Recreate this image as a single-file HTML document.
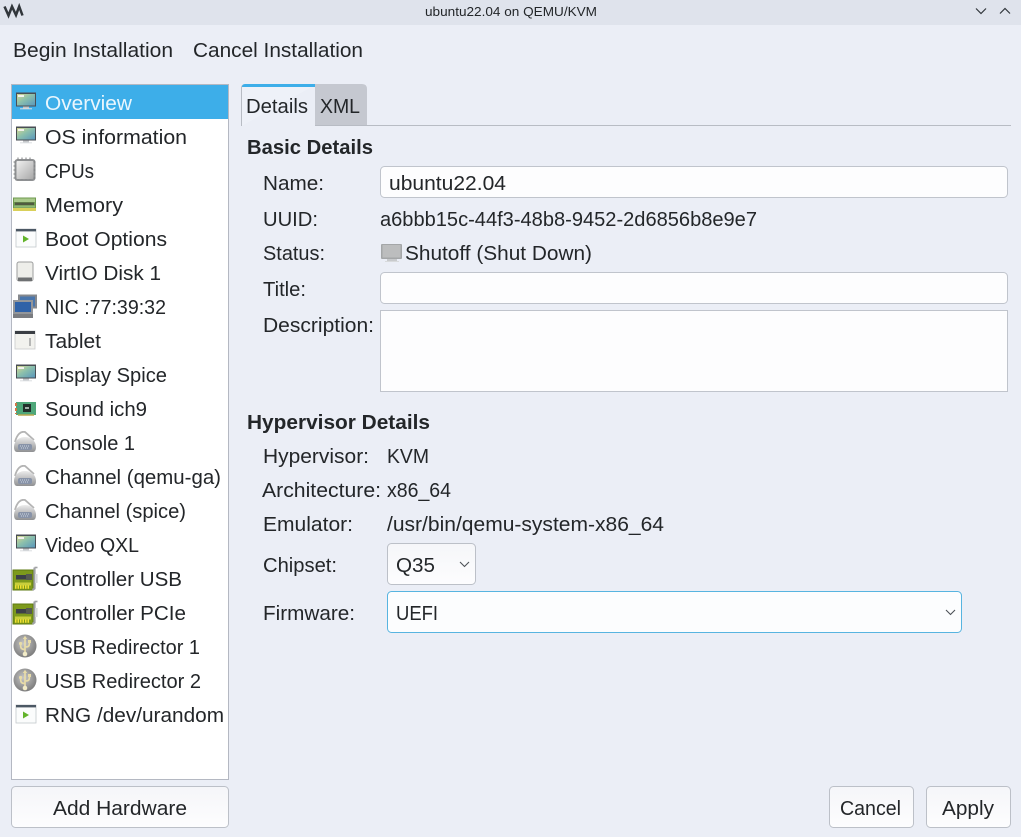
<!DOCTYPE html>
<html><head><meta charset="utf-8"><title>ubuntu22.04 on QEMU/KVM</title>
<style>
html,body{margin:0;padding:0;background:#ebeef6;width:1021px;height:837px;overflow:hidden}
svg{display:block}
text{font-family:"Liberation Sans",sans-serif;font-size:20px;fill:#232629}
</style></head><body>
<svg xmlns="http://www.w3.org/2000/svg" width="1021" height="837" viewBox="0 0 1021 837">
<defs>
<linearGradient id="btn" x1="0" y1="0" x2="0" y2="1"><stop offset="0" stop-color="#f5f6f9"/><stop offset="1" stop-color="#fdfdfe"/></linearGradient>
<linearGradient id="scr" x1="0" y1="0" x2="1" y2="1"><stop offset="0" stop-color="#d8d890"/><stop offset=".45" stop-color="#8cc0ac"/><stop offset="1" stop-color="#5a98bc"/></linearGradient>
<linearGradient id="gry" x1="0" y1="0" x2="1" y2="1"><stop offset="0" stop-color="#f0f0f0"/><stop offset="1" stop-color="#a8a8a8"/></linearGradient>
<linearGradient id="dome" x1="0" y1="0" x2="0" y2="1"><stop offset="0" stop-color="#ececec"/><stop offset="1" stop-color="#8f9092"/></linearGradient>
<radialGradient id="usb" cx=".45" cy=".4" r=".7"><stop offset="0" stop-color="#c8c8c8"/><stop offset="1" stop-color="#707070"/></radialGradient>
<symbol id="mon" width="22" height="22" viewBox="0 0 22 22"><rect x="1" y="1.5" width="20" height="14" fill="#4a4e54"/><rect x="2" y="3" width="18" height="11.500" fill="url(#scr)"/><rect x="3" y="4" width="6" height="2" fill="#f2f2ee"/><rect x="8" y="15.500" width="6" height="2" fill="#c4c7ca"/><rect x="5" y="17.300" width="12" height="1" fill="#dcdee0"/></symbol>
<symbol id="win" width="22" height="22" viewBox="0 0 22 22"><rect x="1" y="1" width="20" height="18" fill="#fbfcfc" stroke="#c4c8cc" stroke-width=".8"/><rect x="1" y="1" width="20" height="2.400" fill="#4c5864"/><path d="M8 7.500l6 3.500-6 3.500z" fill="#62b32a"/></symbol>
<symbol id="ser" width="24" height="22" viewBox="0 0 24 22"><path d="M2 11C4 3 8 0 12 1l9 8" fill="none" stroke="#b4b4b4" stroke-width="1.800"/><path d="M1 16C1 10 6 6 12 6s11 4 11 10c0 3-1 5-3 5H4c-2 0-3-2-3-5z" fill="url(#dome)"/><rect x="5" y="13" width="14" height="6" rx="2" fill="#8893a8"/><path d="M7 15h10M8 17h8" stroke="#cdd4e0" stroke-dasharray="1 1"/></symbol>
<symbol id="pci" width="26" height="26" viewBox="0 0 26 26"><rect x="1" y="5" width="20" height="20" fill="#7d9a1c"/><rect x="1" y="5" width="20" height="20" fill="none" stroke="#5e7a12"/><rect x="4" y="10" width="12" height="4.500" fill="#3c4048"/><rect x="14" y="9" width="6" height="6" fill="#555a50"/><path d="M3 19h16" stroke="#c9cf3c" stroke-width="3"/><path d="M3 22h15" stroke="#f0e030" stroke-width="3.500" stroke-dasharray="1.500 1"/><path d="M22.500 2.500v21l-2 1.500" fill="none" stroke="#a0a2a4" stroke-width="2.200"/><path d="M22.500 2.500h3" stroke="#a0a2a4" stroke-width="1.600"/><rect x="23" y="9" width="2.600" height="9" fill="#d8dadc"/></symbol>
<symbol id="usbi" width="24" height="24" viewBox="0 0 24 24"><circle cx="12" cy="12" r="11.500" fill="url(#usb)"/><path d="M12 3v17M12 15.500c-3.800 0-4.400-1.500-4.400-5M12 13c3.800 0 4.400-1 4.400-4" fill="none" stroke="#e8dca8" stroke-width="1.700"/><path d="M9.800 5L12 1.800 14.200 5z" fill="#e8dca8"/><circle cx="12" cy="20" r="2.300" fill="#f2ecc8"/><circle cx="7.600" cy="9.500" r="1.600" fill="#e8dca8"/><rect x="15" y="6" width="3" height="3" fill="#e8dca8"/></symbol>
</defs>

<!-- title bar -->
<rect x="0" y="0" width="1021" height="25" fill="#dfe3ec"/>
<path d="M4.500 6.500 8.500 15.500 12 6.500 16 15 19.200 6.500 22.500 15.500" fill="none" stroke="#31363b" stroke-width="2.500"/>
<text x="425" y="16" textLength="172" lengthAdjust="spacingAndGlyphs" style="font-size:13.3px">ubuntu22.04 on QEMU/KVM</text>
<path d="M976 8.500l5 5 5-5" fill="none" stroke="#31363b" stroke-width="1.200"/>
<path d="M1000 13.500l5-5 5 5" fill="none" stroke="#31363b" stroke-width="1.200"/>

<!-- menu -->
<text x="13" y="57" textLength="160" lengthAdjust="spacingAndGlyphs">Begin Installation</text>
<text x="193" y="57" textLength="170" lengthAdjust="spacingAndGlyphs">Cancel Installation</text>

<!-- list -->
<rect x="11.500" y="84.500" width="217" height="695" fill="#fff" stroke="#b4b8c2"/>
<rect x="12" y="85" width="216" height="34" fill="#3daee9"/>
<use href="#mon" x="15" y="91"/>
<use href="#mon" x="15" y="125"/>
<g>
<rect x="14.500" y="159" width="21" height="22" rx="3" fill="#8e9092"/>
<path d="M13.500 162h23M13.500 166h23M13.500 170h23M13.500 174h23M13.500 178h23M18 157.500v24M22 157.500v24M26 157.500v24M30 157.500v24" stroke="#7c7e80" stroke-width="1" stroke-dasharray="2 2" fill="none"/>
<rect x="16.500" y="161" width="17" height="18" rx="1" fill="url(#gry)"/>
</g>
<g>
<rect x="13" y="197.500" width="23" height="13.500" fill="#6f9a4f"/>
<rect x="14" y="198.500" width="21" height="3.500" fill="#a9c98b"/>
<rect x="15" y="202.500" width="19" height="2.600" fill="#4f5a40"/>
<rect x="14" y="205.500" width="21" height="2" fill="#8fb878"/>
<rect x="13" y="208" width="23" height="3" fill="#d9d05a"/>
</g>
<use href="#win" x="15" y="228"/>
<g>
<rect x="17" y="262" width="16" height="19" rx="2" fill="#eeeeea" stroke="#9c9e9e"/>
<rect x="18" y="277.500" width="14" height="3.500" fill="#6e7072"/>
</g>
<g>
<rect x="18" y="294.500" width="19" height="14" fill="#85888d"/><rect x="20" y="296.500" width="15" height="10" fill="#4a76ac"/>
<rect x="13" y="300" width="20" height="14" fill="#93969a"/><rect x="15" y="302" width="16" height="10" fill="#2f62a8"/>
<rect x="13" y="314" width="20" height="4" fill="#7a7c80"/>
</g>
<g>
<rect x="15" y="331" width="20" height="18" fill="#f2f2ee" stroke="#c8cacc" stroke-width=".8"/>
<rect x="15" y="331" width="20" height="3" fill="#3a3e44"/>
<path d="M30 338v8" stroke="#7a7c7e" stroke-width="1"/>
</g>
<use href="#mon" x="15" y="363"/>
<g>
<rect x="16" y="402" width="20" height="13" fill="#4fa77a"/>
<rect x="23" y="404" width="8" height="8" fill="#22302c"/>
<path d="M25 408h4" stroke="#d8e8e0" stroke-width="1.400"/>
<path d="M16 403v11" stroke="#d07848" stroke-width="2" stroke-dasharray="3 2"/>
<path d="M18 415h16" stroke="#b8a850" stroke-width="1.500"/>
</g>
<use href="#ser" x="13" y="431"/>
<use href="#ser" x="13" y="465"/>
<use href="#ser" x="13" y="499"/>
<use href="#mon" x="15" y="533"/>
<use href="#pci" x="12" y="565"/>
<use href="#pci" x="12" y="599"/>
<use href="#usbi" x="13" y="634"/>
<use href="#usbi" x="13" y="668"/>
<use href="#win" x="15" y="704"/>

<text x="45" y="110" textLength="87" lengthAdjust="spacingAndGlyphs" style="fill:#eaf6fd">Overview</text>
<text x="45" y="144" textLength="142" lengthAdjust="spacingAndGlyphs">OS information</text>
<text x="45" y="178" textLength="49" lengthAdjust="spacingAndGlyphs">CPUs</text>
<text x="45" y="212" textLength="78" lengthAdjust="spacingAndGlyphs">Memory</text>
<text x="45" y="246" textLength="122" lengthAdjust="spacingAndGlyphs">Boot Options</text>
<text x="45" y="280" textLength="116" lengthAdjust="spacingAndGlyphs">VirtIO Disk 1</text>
<text x="45" y="314" textLength="121" lengthAdjust="spacingAndGlyphs">NIC :77:39:32</text>
<text x="45" y="348" textLength="56" lengthAdjust="spacingAndGlyphs">Tablet</text>
<text x="45" y="382" textLength="122" lengthAdjust="spacingAndGlyphs">Display Spice</text>
<text x="45" y="416" textLength="102" lengthAdjust="spacingAndGlyphs">Sound ich9</text>
<text x="45" y="450" textLength="90" lengthAdjust="spacingAndGlyphs">Console 1</text>
<text x="45" y="484" textLength="176" lengthAdjust="spacingAndGlyphs">Channel (qemu-ga)</text>
<text x="45" y="518" textLength="141" lengthAdjust="spacingAndGlyphs">Channel (spice)</text>
<text x="45" y="552" textLength="94" lengthAdjust="spacingAndGlyphs">Video QXL</text>
<text x="45" y="586" textLength="137" lengthAdjust="spacingAndGlyphs">Controller USB</text>
<text x="45" y="620" textLength="141" lengthAdjust="spacingAndGlyphs">Controller PCIe</text>
<text x="45" y="654" textLength="155" lengthAdjust="spacingAndGlyphs">USB Redirector 1</text>
<text x="45" y="688" textLength="156" lengthAdjust="spacingAndGlyphs">USB Redirector 2</text>
<text x="45" y="722" textLength="179" lengthAdjust="spacingAndGlyphs">RNG /dev/urandom</text>

<!-- bottom buttons -->
<rect x="11.500" y="786.500" width="217" height="41" rx="4" fill="url(#btn)" stroke="#bcc0c8"/>
<text x="53" y="815" textLength="134" lengthAdjust="spacingAndGlyphs">Add Hardware</text>
<rect x="829.500" y="786.500" width="84" height="41" rx="4" fill="url(#btn)" stroke="#bcc0c8"/>
<text x="840" y="815" textLength="61" lengthAdjust="spacingAndGlyphs">Cancel</text>
<rect x="926.500" y="786.500" width="84" height="41" rx="4" fill="url(#btn)" stroke="#bcc0c8"/>
<text x="942" y="815" textLength="52" lengthAdjust="spacingAndGlyphs">Apply</text>

<!-- tabs -->
<path d="M315 125.500H1011" stroke="#b8bcc4"/>
<path d="M241.500 126V88q0-3 3-3H315" fill="#eef1f8" stroke="#b8bcc4"/>
<path d="M315 84h47q5 0 5 5v36H315z" fill="#c5c8d0"/>
<path d="M242 87q0-3 3-3h70v3z" fill="#3daee9"/>
<text x="246" y="113" textLength="62" lengthAdjust="spacingAndGlyphs">Details</text>
<text x="320" y="113" textLength="40" lengthAdjust="spacingAndGlyphs">XML</text>

<text x="247" y="154" textLength="126" lengthAdjust="spacingAndGlyphs" style="font-weight:bold">Basic Details</text>
<text x="263" y="190" textLength="61" lengthAdjust="spacingAndGlyphs">Name:</text>
<rect x="380.500" y="166.500" width="627" height="31" rx="4" fill="#fdfdfe" stroke="#c0c4cc"/>
<text x="389" y="190" textLength="117" lengthAdjust="spacingAndGlyphs">ubuntu22.04</text>
<text x="263" y="226" textLength="55" lengthAdjust="spacingAndGlyphs">UUID:</text>
<text x="380" y="226" textLength="377" lengthAdjust="spacingAndGlyphs">a6bbb15c-44f3-48b8-9452-2d6856b8e9e7</text>
<text x="263" y="260" textLength="62" lengthAdjust="spacingAndGlyphs">Status:</text>
<g>
<rect x="381" y="244" width="21" height="15" rx="1" fill="#a4a6a8"/>
<rect x="382.500" y="245" width="18" height="12.500" fill="#bcbdbe"/>
<rect x="387" y="259" width="10" height="2" fill="#c8cacc"/>
<rect x="385" y="261" width="14" height="1" fill="#d8dadc"/>
</g>
<text x="405" y="260" textLength="187" lengthAdjust="spacingAndGlyphs">Shutoff (Shut Down)</text>
<text x="263" y="296" textLength="43" lengthAdjust="spacingAndGlyphs">Title:</text>
<rect x="380.500" y="272.500" width="627" height="31" rx="4" fill="#fdfdfe" stroke="#c0c4cc"/>
<text x="263" y="332" textLength="111" lengthAdjust="spacingAndGlyphs">Description:</text>
<rect x="380.500" y="310.500" width="627" height="81" fill="#fdfdfe" stroke="#c0c4cc"/>

<text x="247" y="429" textLength="183" lengthAdjust="spacingAndGlyphs" style="font-weight:bold">Hypervisor Details</text>
<text x="263" y="463" textLength="106" lengthAdjust="spacingAndGlyphs">Hypervisor:</text>
<text x="387" y="463" textLength="42" lengthAdjust="spacingAndGlyphs">KVM</text>
<text x="262" y="497" textLength="119" lengthAdjust="spacingAndGlyphs">Architecture:</text>
<text x="387" y="497" textLength="64" lengthAdjust="spacingAndGlyphs">x86_64</text>
<text x="263" y="531" textLength="90" lengthAdjust="spacingAndGlyphs">Emulator:</text>
<text x="387" y="531" textLength="277" lengthAdjust="spacingAndGlyphs">/usr/bin/qemu-system-x86_64</text>
<text x="263" y="572" textLength="74" lengthAdjust="spacingAndGlyphs">Chipset:</text>
<rect x="387.500" y="543.500" width="88" height="41" rx="4" fill="url(#btn)" stroke="#bcc0c8"/>
<text x="396" y="572" textLength="39" lengthAdjust="spacingAndGlyphs">Q35</text>
<path d="M460 562l4.500 4.500 4.500-4.500" fill="none" stroke="#4d5157" stroke-width="1.100"/>
<text x="263" y="620" textLength="92" lengthAdjust="spacingAndGlyphs">Firmware:</text>
<rect x="387.500" y="591.500" width="574" height="41" rx="4" fill="#fcfdfe" stroke="#57b4e0"/>
<text x="396" y="620" textLength="42" lengthAdjust="spacingAndGlyphs">UEFI</text>
<path d="M946 610l4.500 4.500 4.500-4.500" fill="none" stroke="#4d5157" stroke-width="1.100"/>
</svg>
</body></html>
